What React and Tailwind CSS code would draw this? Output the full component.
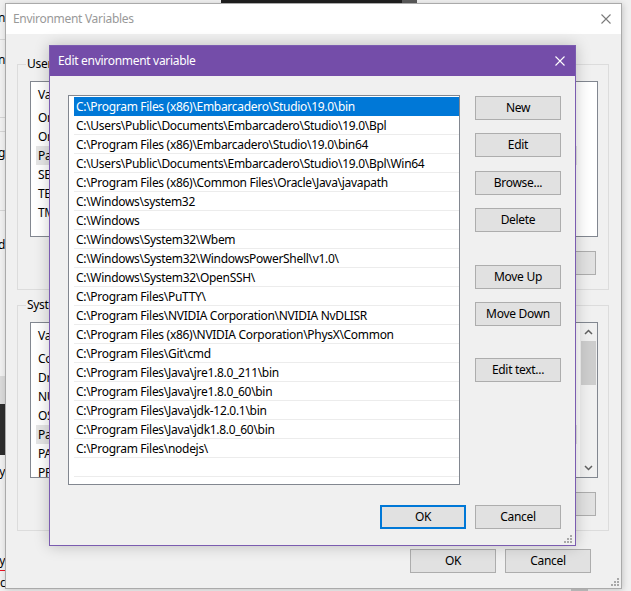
import React from "react";

const font = "font-['Noto_Sans','DejaVu_Sans',sans-serif] tracking-[-0.3px]";

const paths = [
  "C:\\Program Files (x86)\\Embarcadero\\Studio\\19.0\\bin",
  "C:\\Users\\Public\\Documents\\Embarcadero\\Studio\\19.0\\Bpl",
  "C:\\Program Files (x86)\\Embarcadero\\Studio\\19.0\\bin64",
  "C:\\Users\\Public\\Documents\\Embarcadero\\Studio\\19.0\\Bpl\\Win64",
  "C:\\Program Files (x86)\\Common Files\\Oracle\\Java\\javapath",
  "C:\\Windows\\system32",
  "C:\\Windows",
  "C:\\Windows\\System32\\Wbem",
  "C:\\Windows\\System32\\WindowsPowerShell\\v1.0\\",
  "C:\\Windows\\System32\\OpenSSH\\",
  "C:\\Program Files\\PuTTY\\",
  "C:\\Program Files\\NVIDIA Corporation\\NVIDIA NvDLISR",
  "C:\\Program Files (x86)\\NVIDIA Corporation\\PhysX\\Common",
  "C:\\Program Files\\Git\\cmd",
  "C:\\Program Files\\Java\\jre1.8.0_211\\bin",
  "C:\\Program Files\\Java\\jre1.8.0_60\\bin",
  "C:\\Program Files\\Java\\jdk-12.0.1\\bin",
  "C:\\Program Files\\Java\\jdk1.8.0_60\\bin",
  "C:\\Program Files\\nodejs\\",
  "",
];

const userVars = ["OneDrive", "OneDriveConsumer", "Path", "SESSIONNAME", "TEMP", "TMP"];
const systemVars = ["ComSpec", "DriverData", "NUMBER_OF_PROCESSORS", "OS", "Path", "PATHEXT", "PROCESSOR_ARCHITECTURE"];

function Btn({ children, primary }) {
  return (
    <div
      className={
        primary
          ? "flex h-[24px] w-[86px] items-center justify-center border-2 border-[#0078d7] bg-[#e1e1e1] text-[12px] text-black"
          : "flex h-[24px] w-[86px] items-center justify-center border border-[#adadad] bg-[#e1e1e1] text-[12px] text-black"
      }
    >
      {children}
    </div>
  );
}

function Grip() {
  return (
    <svg width="8" height="8" viewBox="0 0 8 8" className="block">
      <g fill="#a8a8a8">
        <rect x="6" y="0" width="2" height="2" />
        <rect x="3" y="3" width="2" height="2" />
        <rect x="6" y="3" width="2" height="2" />
        <rect x="0" y="6" width="2" height="2" />
        <rect x="3" y="6" width="2" height="2" />
        <rect x="6" y="6" width="2" height="2" />
      </g>
    </svg>
  );
}

function CloseX({ color }) {
  return (
    <svg width="10" height="10" viewBox="0 0 10 10" className="block">
      <path d="M0.5 0.5L9.5 9.5M9.5 0.5L0.5 9.5" stroke={color} strokeWidth="1.1" />
    </svg>
  );
}

function VarList({ rows, selected, scroll }) {
  return (
    <div className="ml-[12px] flex h-[156px] w-[568px] overflow-hidden border border-[#828790] bg-white">
      <div className="min-w-0 flex-1">
        <div className="flex h-[26px] items-center pl-[7px] text-[12px] text-black">
          <span className="w-[160px]">Variable</span>
          <span>Value</span>
        </div>
        {rows.map((r, i) => (
          <div
            key={r}
            className={
              i === selected
                ? "ml-[5px] flex h-[19px] w-[541px] items-center bg-[#e5e5e5] pl-[2px] pt-[1px] text-[12px] text-black"
                : "ml-[5px] flex h-[19px] w-[541px] items-center pl-[2px] pt-[1px] text-[12px] text-black"
            }
          >
            {r}
          </div>
        ))}
      </div>
      {scroll && (
        <div className="flex w-[17px] flex-col items-center bg-[#f0f0f0]">
          <div className="flex h-[18px] w-full items-center justify-center">
            <svg width="9" height="6" viewBox="0 0 9 6">
              <path d="M1 5L4.5 1.5L8 5" stroke="#606060" strokeWidth="1.5" fill="none" />
            </svg>
          </div>
          <div className="h-[44px] w-[15px] bg-[#cdcdcd]" />
          <div className="flex-1" />
          <div className="flex h-[18px] w-full items-center justify-center">
            <svg width="9" height="6" viewBox="0 0 9 6">
              <path d="M1 1L4.5 4.5L8 1" stroke="#606060" strokeWidth="1.5" fill="none" />
            </svg>
          </div>
        </div>
      )}
    </div>
  );
}

function Group({ label, children, className }) {
  return (
    <div className={"relative ml-[11px] h-[226px] w-[592px] border border-[#dcdcdc] pt-[16px] " + className}>
      <span className="absolute left-[8px] top-[-9px] bg-[#f0f0f0] px-[1px] text-[12px] leading-[16px] text-black">
        {label}
      </span>
      {children}
    </div>
  );
}

function GroupButtons({ labels }) {
  return (
    <div className="mt-[14px] flex justify-end gap-[10px] pr-[12px]">
      {labels.map((l) => (
        <Btn key={l}>{l}</Btn>
      ))}
    </div>
  );
}

export default function App() {
  return (
    <div className={"relative h-[591px] w-[631px] overflow-hidden bg-[#f0f0f0] " + font}>
      {/* desktop behind */}
      <div className="absolute left-[221px] top-0 h-[4px] w-[181px] bg-[#1f1f1f]" />
      <div className="absolute left-[402px] top-0 h-[4px] w-[15px] bg-[#5a5a5a]" />
      <div className="absolute left-0 top-0 h-full w-[5px] overflow-hidden bg-[#f0f0f0] text-[12px] text-black">
        <div className="absolute right-0 top-[9px] whitespace-nowrap">Design</div>
        <div className="absolute left-0 top-[39px] h-px w-full bg-[#d4d4d4]" />
        <div className="absolute right-0 top-[51px] whitespace-nowrap">Design</div>
        <div className="absolute left-0 top-[117px] h-px w-full bg-[#d4d4d4]" />
        <div className="absolute left-0 top-[131px] h-px w-full bg-[#d4d4d4]" />
        <div className="absolute right-0 top-[144px] whitespace-nowrap">Setting</div>
        <div className="absolute left-0 top-[210px] h-px w-full bg-[#d4d4d4]" />
        <div className="absolute right-0 top-[236px] whitespace-nowrap">Build</div>
        <div className="absolute left-0 top-[376px] h-[28px] w-full bg-[#d9d9d9]" />
        <div className="absolute left-0 top-[404px] h-[51px] w-full bg-[#2d2d2d]" />
        <div className="absolute right-0 top-[463px] whitespace-nowrap">Display</div>
        <div className="absolute right-0 top-[552px] whitespace-nowrap border-b border-[#e81123]">Apply</div>
        <div className="absolute left-0 top-[574px] whitespace-nowrap">cog</div>
      </div>
      <div className="absolute left-[571px] top-[588px] h-[3px] w-[17px] bg-[#c4c4c4]" />

      {/* Environment Variables window */}
      <div className="absolute left-[5px] top-[3px] flex h-[586px] w-[617px] flex-col border border-[#aaaaaa] bg-[#f0f0f0] shadow-[1px_1px_6px_rgba(0,0,0,0.18)]">
        <div className="flex h-[30px] shrink-0 items-center justify-between bg-white pl-[7px] pr-[10px]">
          <span className="text-[12px] text-[#999999]">Environment Variables</span>
          <CloseX color="#7a7a7a" />
        </div>
        <div className="relative flex flex-1 flex-col pt-[30px]">
          <Group label="User variables for Admin">
            <VarList rows={userVars} selected={2} />
            <GroupButtons labels={["New...", "Edit...", "Delete"]} />
          </Group>
          <Group label="System variables" className="mt-[15px]">
            <VarList rows={systemVars} selected={4} scroll />
            <GroupButtons labels={["New...", "Edit...", "Delete"]} />
          </Group>
          <div className="mt-[18px] flex justify-end gap-[9px] pr-[30px]">
            <Btn>OK</Btn>
            <Btn>Cancel</Btn>
          </div>
          <div className="absolute bottom-[2px] right-[2px]">
            <Grip />
          </div>
        </div>
      </div>

      {/* Edit environment variable dialog */}
      <div className="absolute left-[49px] top-[45px] flex h-[501px] w-[527px] flex-col border border-[#7b5cb0] bg-[#f0f0f0] shadow-[0_0_14px_rgba(0,0,0,0.22)]">
        <div className="flex h-[30px] shrink-0 items-center justify-between bg-[#744da9] pl-[8px] pr-[10px]">
          <span className="text-[12px] text-white">Edit environment variable</span>
          <CloseX color="#ffffff" />
        </div>
        <div className="relative flex flex-1 flex-col pl-[18px] pr-[14px] pt-[19px]">
          <div className="flex gap-[15px]">
            <div className="h-[390px] w-[392px] overflow-hidden border border-[#828790] bg-white pt-[1px]">
              {paths.map((p, i) => (
                <div
                  key={i}
                  className={
                    i === 0
                      ? "ml-[5px] flex h-[19px] items-center border-b border-[#0078d7] bg-[#0078d7] pl-[2px] pt-[2px] text-[12px] whitespace-nowrap text-white"
                      : "ml-[5px] flex h-[19px] items-center border-b border-[#ececec] pl-[2px] pt-[2px] text-[12px] whitespace-nowrap text-black"
                  }
                >
                  {p}
                </div>
              ))}
            </div>
            <div className="flex flex-col pt-[1px]">
              <Btn>New</Btn>
              <div className="mt-[13px]"><Btn>Edit</Btn></div>
              <div className="mt-[14px]"><Btn>Browse...</Btn></div>
              <div className="mt-[13px]"><Btn>Delete</Btn></div>
              <div className="mt-[33px]"><Btn>Move Up</Btn></div>
              <div className="mt-[13px]"><Btn>Move Down</Btn></div>
              <div className="mt-[32px]"><Btn>Edit text...</Btn></div>
            </div>
          </div>
          <div className="mt-[20px] flex justify-end gap-[9px]">
            <Btn primary>OK</Btn>
            <Btn>Cancel</Btn>
          </div>
          <div className="absolute bottom-[2px] right-[3px]">
            <Grip />
          </div>
        </div>
      </div>
    </div>
  );
}
